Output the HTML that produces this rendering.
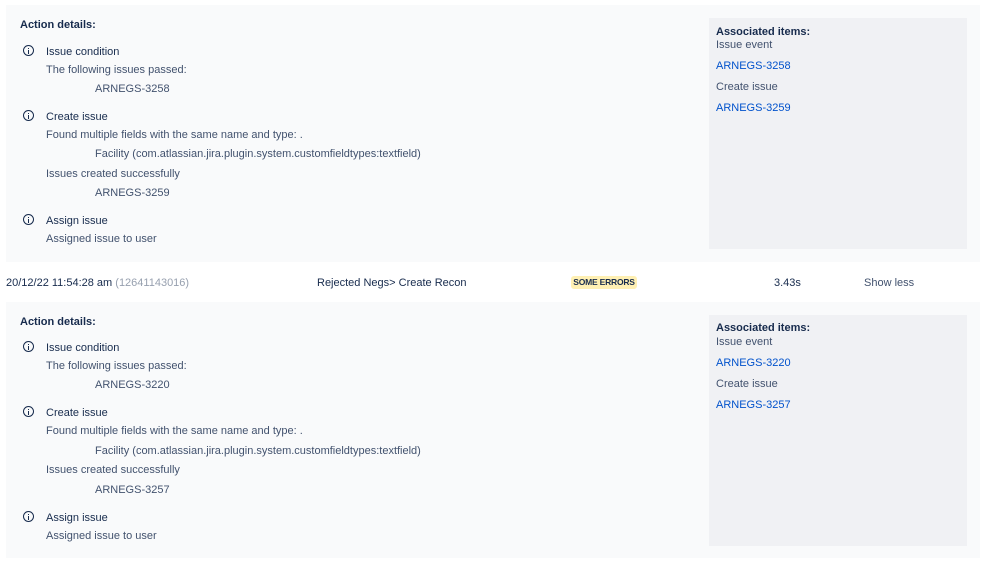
<!DOCTYPE html>
<html><head><meta charset="utf-8"><style>
body{margin:0;width:998px;height:564px;background:#fff;font-family:"Liberation Sans",sans-serif;font-size:11px;color:#42526e;position:relative;overflow:hidden}
.p{position:absolute;left:6px;width:974px;background:#f9fafb}
.r{position:absolute;left:709px;width:258px;background:#f0f1f4}
.t{position:absolute;white-space:nowrap;line-height:14px;transform:translateY(-6px)}
.b{font-weight:bold;color:#172b4d}
.k{color:#172b4d}
.l{color:#0052cc}
.i{position:absolute;width:9px;height:9px;border:1.4px solid #172b4d;border-radius:50%;transform:translate(-6px,-6px)}
.i:before{content:"";position:absolute;left:3.8px;top:1.5px;width:1.5px;height:1.5px;background:#172b4d}
.i:after{content:"";position:absolute;left:3.8px;top:4px;width:1.5px;height:3.5px;background:#172b4d}
.badge{position:absolute;left:571px;top:276px;width:66px;height:13px;background:#fff0b3;border-radius:3px;font-size:8.5px;font-weight:bold;color:#172b4d;text-align:center;line-height:13px;white-space:nowrap;letter-spacing:-0.2px}
</style></head><body>
<div class="p" style="top:5px;height:257px"></div>
<div class="r" style="top:18px;height:231px"></div>
<div class="p" style="top:302px;height:256px"></div>
<div class="r" style="top:315px;height:231px"></div>

<div class="t b" style="left:20px;top:24px">Action details:</div>
<div class="i" style="left:29px;top:51px"></div>
<div class="t k" style="left:46px;top:51px">Issue condition</div>
<div class="t" style="left:46px;top:69px">The following issues passed:</div>
<div class="t" style="left:95px;top:88px">ARNEGS-3258</div>
<div class="i" style="left:29px;top:116px"></div>
<div class="t k" style="left:46px;top:116px">Create issue</div>
<div class="t" style="left:46px;top:134px">Found multiple fields with the same name and type: .</div>
<div class="t" style="left:95px;top:153px">Facility (com.atlassian.jira.plugin.system.customfieldtypes:textfield)</div>
<div class="t" style="left:46px;top:173px">Issues created successfully</div>
<div class="t" style="left:95px;top:192px">ARNEGS-3259</div>
<div class="i" style="left:29px;top:220px"></div>
<div class="t k" style="left:46px;top:220px">Assign issue</div>
<div class="t" style="left:46px;top:238px">Assigned issue to user</div>
<div class="t b" style="left:716px;top:31px">Associated items:</div>
<div class="t" style="left:716px;top:44px">Issue event</div>
<div class="t l" style="left:716px;top:65px">ARNEGS-3258</div>
<div class="t" style="left:716px;top:86px">Create issue</div>
<div class="t l" style="left:716px;top:107px">ARNEGS-3259</div>

<div class="t k" style="left:6px;top:282px">20/12/22 11:54:28 am <span style="color:#97a0af">(12641143016)</span></div>
<div class="t k" style="left:317px;top:282px">Rejected Negs&gt; Create Recon</div>
<div class="badge">SOME ERRORS</div>
<div class="t k" style="left:774px;top:282px">3.43s</div>
<div class="t" style="left:864px;top:282px">Show less</div>

<div class="t b" style="left:20px;top:321px">Action details:</div>
<div class="i" style="left:29px;top:347px"></div>
<div class="t k" style="left:46px;top:347px">Issue condition</div>
<div class="t" style="left:46px;top:365px">The following issues passed:</div>
<div class="t" style="left:95px;top:384px">ARNEGS-3220</div>
<div class="i" style="left:29px;top:412px"></div>
<div class="t k" style="left:46px;top:412px">Create issue</div>
<div class="t" style="left:46px;top:430px">Found multiple fields with the same name and type: .</div>
<div class="t" style="left:95px;top:450px">Facility (com.atlassian.jira.plugin.system.customfieldtypes:textfield)</div>
<div class="t" style="left:46px;top:469px">Issues created successfully</div>
<div class="t" style="left:95px;top:489px">ARNEGS-3257</div>
<div class="i" style="left:29px;top:517px"></div>
<div class="t k" style="left:46px;top:517px">Assign issue</div>
<div class="t" style="left:46px;top:535px">Assigned issue to user</div>
<div class="t b" style="left:716px;top:327px">Associated items:</div>
<div class="t" style="left:716px;top:341px">Issue event</div>
<div class="t l" style="left:716px;top:362px">ARNEGS-3220</div>
<div class="t" style="left:716px;top:383px">Create issue</div>
<div class="t l" style="left:716px;top:404px">ARNEGS-3257</div>
</body></html>
